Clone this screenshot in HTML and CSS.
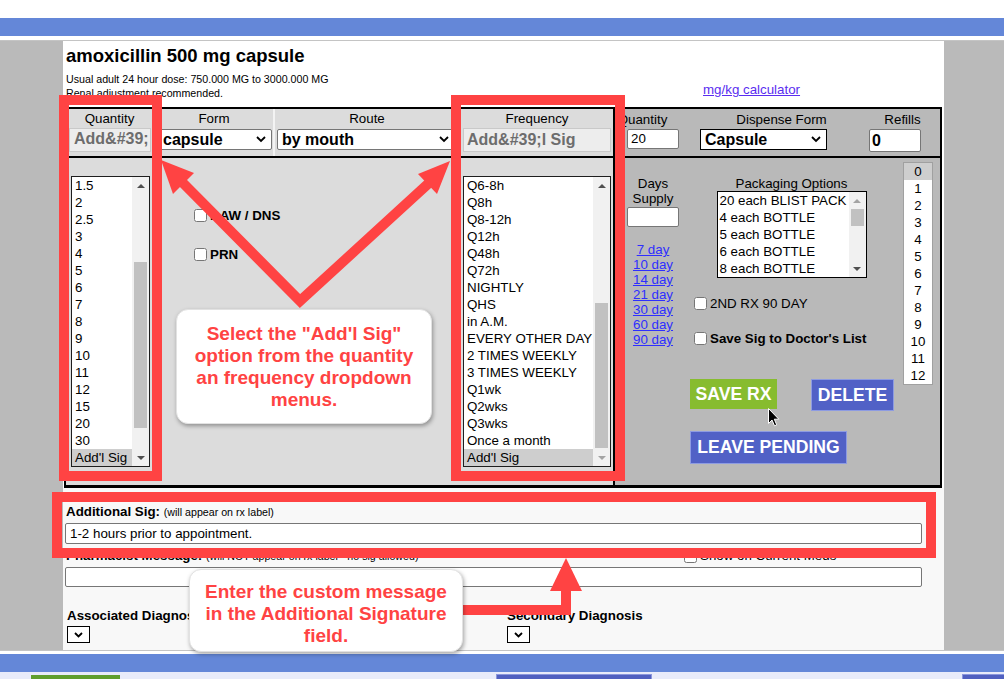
FILE: index.html
```html
<!DOCTYPE html>
<html lang="en">
<head>
    <meta charset="UTF-8">
    <meta name="viewport" content="width=device-width, initial-scale=1.0">
    <title>Prescription - amoxicillin</title>
    <link rel="stylesheet" href="styles.css">
</head>
<body>
    <div class="top-space"></div>
    <div class="nav-bar"></div>

    <div class="page">
        <div class="main">
            <!-- Drug header -->
            <div class="drug-header">
                <div class="drug-info">
                    <h1>amoxicillin 500 mg capsule</h1>
                    <p class="first">Usual adult 24 hour dose: 750.000 MG to 3000.000 MG</p>
                    <p>Renal adjustment recommended.</p>
                </div>
                <a href="#" class="calc-link">mg/kg calculator</a>
            </div>

            <!-- Prescription table -->
            <div class="rx-table">
                <div class="rx-left">
                    <div class="head-row left-head">
                        <div class="head-cell">
                            <div class="head-label">Quantity</div>
                            <div class="ro-box qty-box">Add&amp;#39;</div>
                        </div>
                        <div class="head-cell">
                            <div class="head-label">Form</div>
                            <div class="fake-select form-select">
                                <span>capsule</span>
                                <svg width="10" height="7" viewBox="0 0 10 7"><path d="M1 1 L5 5 L9 1" fill="none" stroke="#000" stroke-width="1.8"/></svg>
                            </div>
                        </div>
                        <div class="head-cell">
                            <div class="head-label">Route</div>
                            <div class="fake-select route-select">
                                <span>by mouth</span>
                                <svg width="10" height="7" viewBox="0 0 10 7"><path d="M1 1 L5 5 L9 1" fill="none" stroke="#000" stroke-width="1.8"/></svg>
                            </div>
                        </div>
                        <div class="head-cell">
                            <div class="head-label">Frequency</div>
                            <div class="ro-box freq-box">Add&amp;#39;l Sig</div>
                        </div>
                    </div>

                    <div class="left-body">
                        <div class="listbox qty-list">
                            <div class="opts">
                                <div class="opt">1.5</div>
                                <div class="opt">2</div>
                                <div class="opt">2.5</div>
                                <div class="opt">3</div>
                                <div class="opt">4</div>
                                <div class="opt">5</div>
                                <div class="opt">6</div>
                                <div class="opt">7</div>
                                <div class="opt">8</div>
                                <div class="opt">9</div>
                                <div class="opt">10</div>
                                <div class="opt">11</div>
                                <div class="opt">12</div>
                                <div class="opt">15</div>
                                <div class="opt">20</div>
                                <div class="opt">30</div>
                                <div class="opt sel">Add'l Sig</div>
                            </div>
                            <div class="vscroll">
                                <div class="arr up"></div>
                                <div class="track"><div class="thumb qty-thumb"></div></div>
                                <div class="arr down"></div>
                            </div>
                        </div>

                        <div class="checks">
                            <label class="check-row"><input type="checkbox">DAW / DNS</label>
                            <label class="check-row"><input type="checkbox">PRN</label>
                        </div>

                        <div class="listbox freq-list">
                            <div class="opts">
                                <div class="opt">Q6-8h</div>
                                <div class="opt">Q8h</div>
                                <div class="opt">Q8-12h</div>
                                <div class="opt">Q12h</div>
                                <div class="opt">Q48h</div>
                                <div class="opt">Q72h</div>
                                <div class="opt">NIGHTLY</div>
                                <div class="opt">QHS</div>
                                <div class="opt">in A.M.</div>
                                <div class="opt">EVERY OTHER DAY</div>
                                <div class="opt">2 TIMES WEEKLY</div>
                                <div class="opt">3 TIMES WEEKLY</div>
                                <div class="opt">Q1wk</div>
                                <div class="opt">Q2wks</div>
                                <div class="opt">Q3wks</div>
                                <div class="opt">Once a month</div>
                                <div class="opt sel">Add'l Sig</div>
                            </div>
                            <div class="vscroll">
                                <div class="arr up"></div>
                                <div class="track"><div class="thumb freq-thumb"></div></div>
                                <div class="arr down dim"></div>
                            </div>
                        </div>
                    </div>
                </div>

                <div class="rx-right">
                    <div class="head-row right-head">
                        <div class="rh-cell rh-qty">
                            <div class="head-label">Quantity</div>
                            <div class="text-input qty-input">20</div>
                        </div>
                        <div class="rh-cell rh-form">
                            <div class="head-label">Dispense Form</div>
                            <div class="fake-select dispense-select">
                                <span>Capsule</span>
                                <svg width="10" height="7" viewBox="0 0 10 7"><path d="M1 1 L5 5 L9 1" fill="none" stroke="#000" stroke-width="1.8"/></svg>
                            </div>
                        </div>
                        <div class="rh-cell rh-refills">
                            <div class="head-label">Refills</div>
                            <div class="text-input refill-input">0</div>
                        </div>
                    </div>

                    <div class="right-body">
                        <div class="days-col">
                            <div>Days<br>Supply</div>
                            <div class="text-input days-input"></div>
                            <div class="day-links">
                                <a href="#">7 day</a>
                                <a href="#">10 day</a>
                                <a href="#">14 day</a>
                                <a href="#">21 day</a>
                                <a href="#">30 day</a>
                                <a href="#">60 day</a>
                                <a href="#">90 day</a>
                            </div>
                        </div>

                        <div class="mid-col">
                            <div class="pack-label">Packaging Options</div>
                            <div class="listbox pack-list">
                                <div class="opts">
                                    <div class="opt">20 each BLIST PACK</div>
                                    <div class="opt">4 each BOTTLE</div>
                                    <div class="opt">5 each BOTTLE</div>
                                    <div class="opt">6 each BOTTLE</div>
                                    <div class="opt">8 each BOTTLE</div>
                                </div>
                                <div class="vscroll">
                                    <div class="arr up dim"></div>
                                    <div class="track"><div class="thumb pack-thumb"></div></div>
                                    <div class="arr down"></div>
                                </div>
                            </div>

                            <label class="rx-check second-rx"><input type="checkbox">2ND RX 90 DAY</label>
                            <label class="rx-check save-sig"><input type="checkbox">Save Sig to Doctor's List</label>

                            <div class="btn-row">
                                <div class="btn btn-save">SAVE RX</div>
                                <div class="btn btn-blue btn-delete">DELETE</div>
                            </div>
                            <div class="btn btn-blue btn-pending">LEAVE PENDING</div>
                        </div>

                        <div class="listbox refill-list">
                            <div class="opts">
                                <div class="opt sel">0</div>
                                <div class="opt">1</div>
                                <div class="opt">2</div>
                                <div class="opt">3</div>
                                <div class="opt">4</div>
                                <div class="opt">5</div>
                                <div class="opt">6</div>
                                <div class="opt">7</div>
                                <div class="opt">8</div>
                                <div class="opt">9</div>
                                <div class="opt">10</div>
                                <div class="opt">11</div>
                                <div class="opt">12</div>
                            </div>
                        </div>
                    </div>
                </div>
            </div>

            <!-- Sig and message fields -->
            <div class="sig-area">
                <div class="sig-label">Additional Sig: <small>(will appear on rx label)</small></div>
                <div class="text-field">1-2 hours prior to appointment.</div>

                <div class="pharm-row">
                    <div class="sig-label">Pharmacist Message: <small>(will NOT appear on rx label - no sig allowed)</small></div>
                    <label class="show-meds"><input type="checkbox">Show on Current Meds</label>
                </div>
                <div class="text-field empty"></div>

                <div class="diag-row">
                    <div>
                        <div class="sig-label">Associated Diagnosis</div>
                        <div class="diag-select">
                            <svg width="9" height="6" viewBox="0 0 9 6"><path d="M1 1 L4.5 4.5 L8 1" fill="none" stroke="#000" stroke-width="1.8"/></svg>
                        </div>
                    </div>
                    <div>
                        <div class="sig-label">Secondary Diagnosis</div>
                        <div class="diag-select">
                            <svg width="9" height="6" viewBox="0 0 9 6"><path d="M1 1 L4.5 4.5 L8 1" fill="none" stroke="#000" stroke-width="1.8"/></svg>
                        </div>
                    </div>
                </div>
            </div>
        </div>
    </div>

    <div class="nav-bar bottom-bar"></div>
    <div class="footer">
        <div class="f-btn f-green"></div>
        <div class="f-btn f-blue f-mid"></div>
        <div class="f-btn f-blue f-right"></div>
    </div>

    <!-- Tutorial annotations -->
    <div class="mark mark-qty"></div>
    <div class="mark mark-freq"></div>
    <div class="mark mark-sig"></div>

    <svg class="arrows" width="1004" height="679" viewBox="0 0 1004 679">
        <polyline points="181,181 300,301 429,183" fill="none" stroke="#ff4343" stroke-width="10" stroke-linejoin="miter"/>
        <polygon points="161,160 194,173 173,194" fill="#ff4343"/>
        <polygon points="450,161 418,174 437,194" fill="#ff4343"/>
        <polyline points="450,610 566,610 566,585" fill="none" stroke="#ff4343" stroke-width="10" stroke-linejoin="miter"/>
        <polygon points="566,558 550,591 582,591" fill="#ff4343"/>
    </svg>

    <div class="callout callout-one">Select the "Add'l Sig"<br>option from the quantity<br>an frequency dropdown<br>menus.</div>
    <div class="callout callout-two">Enter the custom message<br>in the Additional Signature<br>field.</div>

    <svg class="cursor" width="12" height="19" viewBox="0 0 12 19">
        <path d="M0.5 0.5 V15.5 L4 12 L6.5 17.8 L8.7 16.8 L6.3 11.2 L10.8 11.2 Z" fill="#000" stroke="#fff" stroke-width="1"/>
    </svg>
</body>
</html>
```

FILE: styles.css
```css
/* General */
* {
    box-sizing: border-box;
}

html {
    overflow: hidden;
}

body {
    margin: 0;
    position: relative;
    width: 1004px;
    height: 679px;
    overflow: hidden;
    font-family: "Liberation Sans", Arial, sans-serif;
    font-size: 13.33px;
    color: #000;
    background-color: #fff;
}

.top-space {
    height: 18px;
}

.nav-bar {
    height: 18px;
    background-color: #6487d8;
}

.page {
    margin-top: 4px;
    padding: 0 60px 0 63px;
    background-color: #bababa;
    border-top: 1px solid #c4c4c4;
    border-bottom: 1px solid #c4c4c4;
}

.main {
    background-color: #fff;
}

/* Drug header */
.drug-header {
    height: 66px;
    display: flex;
    padding: 4px 0 0 3px;
}

.drug-info {
    width: 637px;
}

.drug-info h1 {
    margin: 0;
    font-size: 18.5px;
    line-height: 22px;
}

.drug-info p {
    margin: 0;
    font-size: 10.67px;
    line-height: 14px;
}

.drug-info p.first {
    margin-top: 5px;
}

.calc-link {
    margin-top: 37px;
    align-self: flex-start;
    line-height: 16px;
    color: #5a2df0;
}

/* Prescription table */
.rx-table {
    display: flex;
    width: 878px;
    height: 381px;
    margin-left: 1px;
    border: 2px solid #000;
    border-bottom-width: 3px;
}

.rx-left {
    width: 549px;
    background-color: #dcdcdc;
    border-right: 2px solid #000;
}

.rx-right {
    flex: 1;
    background-color: #b9b9b9;
}

.head-row {
    height: 49px;
    border-bottom: 2px solid #000;
}

.left-head {
    display: grid;
    grid-template-columns: 87px 118px 184px 1fr;
    column-gap: 2px;
    background-color: #f3f3f3;
}

.head-cell {
    padding-top: 2px;
    background-color: #dcdcdc;
}

.head-label {
    line-height: 16px;
    text-align: center;
}

.ro-box {
    height: 24px;
    padding-left: 3px;
    border: 1px solid #c9c9c9;
    background-color: #ededed;
    color: #6d6d6d;
    font-size: 16px;
    font-weight: bold;
    white-space: nowrap;
    overflow: hidden;
}

.qty-box {
    width: 82px;
    margin: 1px 0 0 3px;
    padding-left: 4px;
    line-height: 20px;
}

.freq-box {
    width: 148px;
    margin: 1px 0 0 2px;
    line-height: 21px;
}

.fake-select {
    display: flex;
    align-items: center;
    justify-content: space-between;
    height: 21px;
    padding: 0 5px 0 4px;
    background-color: #fff;
    border: 1px solid #767676;
    border-radius: 2px;
    font-size: 16px;
    font-weight: bold;
    line-height: 19px;
}

.form-select {
    width: 114px;
    margin: 2px 0 0 3px;
}

.route-select {
    width: 178px;
    margin: 2px 0 0 2px;
}

.dispense-select {
    width: 127px;
    margin-top: 1px;
    border-color: #000;
    border-radius: 0;
}

.text-input {
    background-color: #fff;
    border: 1px solid #767676;
    border-radius: 2px;
}

/* Right header */
.right-head {
    display: flex;
    padding-top: 3px;
}

.rh-cell {
    flex-shrink: 0;
}

.rh-qty {
    width: 55px;
}

.qty-input {
    width: 52px;
    height: 20px;
    margin: 1px 0 0 12px;
    padding-left: 3px;
    line-height: 18px;
}

.rh-form {
    width: 163px;
    margin-left: 30px;
}

.rh-refills {
    width: 75px;
    margin-left: 2px;
}

.refill-input {
    width: 52px;
    height: 23px;
    margin: 1px 0 0 4px;
    padding-left: 2px;
    font-size: 16px;
    font-weight: bold;
    line-height: 21px;
}

/* List boxes */
.listbox {
    display: flex;
    background-color: #fff;
    border: 1px solid #1e1e1e;
}

.opts {
    flex: 1;
    min-width: 0;
}

.opt {
    height: 17px;
    line-height: 17px;
    padding-left: 3px;
    white-space: nowrap;
    overflow: hidden;
}

.opt.sel {
    background-color: #cecece;
}

.vscroll {
    width: 17px;
    display: flex;
    flex-direction: column;
    background-color: #f1f1f1;
}

.arr {
    height: 17px;
    display: flex;
    align-items: center;
    justify-content: center;
}

.arr::before {
    content: "";
    border-left: 4px solid transparent;
    border-right: 4px solid transparent;
}

.arr.up::before {
    border-bottom: 4px solid #505050;
}

.arr.down::before {
    border-top: 4px solid #505050;
}

.arr.up.dim::before {
    border-bottom-color: #a3a3a3;
}

.arr.down.dim::before {
    border-top-color: #a3a3a3;
}

.track {
    flex: 1;
    padding: 0 2px;
}

.thumb {
    background-color: #c1c1c1;
}

.qty-thumb {
    margin-top: 68px;
    height: 166px;
}

.freq-thumb {
    margin-top: 109px;
    height: 145px;
}

.pack-thumb {
    height: 17px;
}

/* Left body */
.left-body {
    display: grid;
    grid-template-columns: 79px 1fr 148px;
    align-items: start;
    padding: 18px 2px 0 5px;
}

.checks {
    padding: 33px 0 0 44px;
}

.check-row {
    display: flex;
    align-items: center;
    height: 13px;
    line-height: 13px;
    font-weight: bold;
}

.check-row + .check-row {
    margin-top: 26px;
}

input[type="checkbox"] {
    width: 13px;
    height: 13px;
    margin: 0 3px 0 0;
}

/* Right body */
.right-body {
    display: flex;
    align-items: flex-start;
    padding: 4px 7px 0 12px;
}

.days-col {
    flex-shrink: 0;
    width: 52px;
    margin-top: 14px;
    text-align: center;
    line-height: 15px;
}

.days-input {
    height: 20px;
    margin-top: 1px;
}

.day-links {
    margin-top: 15px;
}

.day-links a {
    display: block;
    color: #2e2eff;
    line-height: 15px;
}

.mid-col {
    flex-shrink: 0;
    width: 203px;
    margin: 14px 0 0 11px;
}

.pack-label {
    line-height: 15px;
    text-align: center;
}

.pack-list {
    width: 150px;
    margin: 0 auto;
    border-color: #000;
}

.pack-list .opt {
    padding-left: 2px;
}

.rx-check {
    display: flex;
    align-items: center;
    height: 13px;
    padding-left: 4px;
}

.second-rx {
    margin-top: 19px;
}

.save-sig {
    margin-top: 22px;
    font-weight: bold;
}

.btn-row {
    display: flex;
    align-items: flex-start;
    margin-top: 34px;
}

.btn {
    display: flex;
    flex-shrink: 0;
    align-items: center;
    justify-content: center;
    color: #fff;
    font-size: 17.6px;
    font-weight: bold;
}

.btn-save {
    width: 87px;
    height: 30px;
    background-color: #87bc2f;
}

.btn-blue {
    background-color: #5161c6;
    border: 1px solid #8d9be2;
}

.btn-delete {
    width: 83px;
    height: 32px;
    margin-left: 34px;
}

.btn-pending {
    width: 157px;
    height: 33px;
    margin-top: 20px;
}

.refill-list {
    flex-shrink: 0;
    width: 30px;
    margin-left: auto;
    border-color: #a0a0a0;
}

.refill-list .opt {
    padding: 0;
    text-align: center;
}

/* Sig area */
.sig-area {
    height: 162px;
    padding: 16px 22px 0 2px;
    background-color: #f8f8f8;
}

.sig-label {
    padding-left: 1px;
    line-height: 16px;
    font-weight: bold;
}

.sig-label small {
    font-size: 10.67px;
    font-weight: normal;
}

.text-field {
    height: 21px;
    margin-top: 3px;
    padding-left: 4px;
    line-height: 19px;
    background-color: #fff;
    border: 1px solid #767676;
    border-radius: 2px;
}

.text-field.empty {
    height: 20px;
}

.pharm-row {
    display: flex;
    margin-top: 4px;
}

.pharm-row .sig-label {
    flex: 1;
}

.show-meds {
    width: 238px;
    display: flex;
    align-items: center;
    line-height: 16px;
}

.diag-row {
    display: grid;
    grid-template-columns: 440px 1fr;
    margin-top: 21px;
    padding-left: 1px;
}

.diag-select {
    width: 23px;
    height: 17px;
    margin: 2px 0 0 1px;
    display: flex;
    align-items: center;
    justify-content: center;
    background-color: #fff;
    border: 1px solid #000;
}

/* Footer */
.bottom-bar {
    margin-top: 3px;
}

.footer {
    display: flex;
    height: 30px;
    background-color: #e8ebfa;
}

.f-btn {
    flex-shrink: 0;
    height: 24px;
}

.f-green {
    width: 89px;
    margin: 3px 0 0 31px;
    background-color: #5f9e2e;
}

.f-blue {
    margin-top: 2px;
    background-color: #5060c0;
    border: 1px solid #8a96dc;
}

.f-mid {
    width: 156px;
    margin-left: 376px;
}

.f-right {
    width: 60px;
    margin-left: 310px;
}

/* Annotations */
.mark {
    position: absolute;
    border: 10px solid #ff4343;
}

.mark-qty {
    left: 59px;
    top: 95px;
    width: 103px;
    height: 386px;
}

.mark-freq {
    left: 451px;
    top: 95px;
    width: 174px;
    height: 386px;
}

.mark-sig {
    left: 52px;
    top: 492px;
    width: 884px;
    height: 66px;
}

.arrows {
    position: absolute;
    left: 0;
    top: 0;
    pointer-events: none;
}

.callout {
    position: absolute;
    background-color: #fff;
    border: 1px solid #e2e2e2;
    border-radius: 12px;
    box-shadow: 1px 2px 4px rgba(0, 0, 0, 0.35);
    color: #ff4343;
    font-size: 19px;
    font-weight: bold;
    line-height: 22px;
    text-align: center;
}

.callout-one {
    left: 176px;
    top: 309px;
    width: 256px;
    height: 115px;
    padding-top: 13px;
}

.callout-two {
    left: 189px;
    top: 569px;
    width: 274px;
    height: 83px;
    padding-top: 11px;
}

.cursor {
    position: absolute;
    left: 768px;
    top: 408px;
}
```
